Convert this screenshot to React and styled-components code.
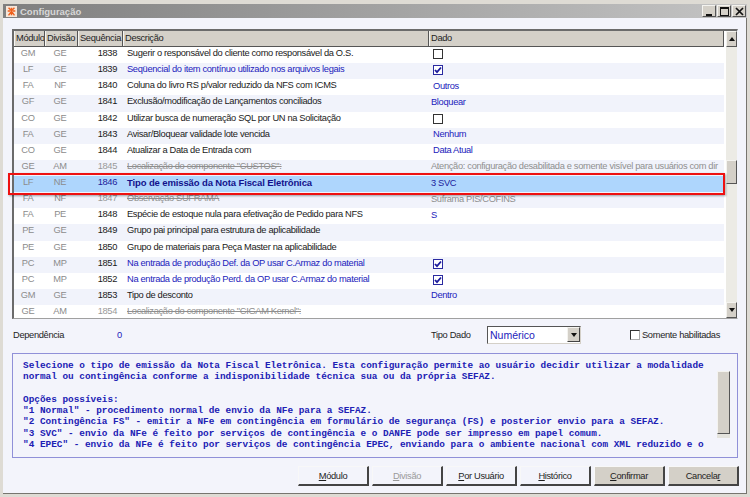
import React from 'react'
import styled, { createGlobalStyle, css } from 'styled-components'

const rows = [
  ['GM', 'GE', 1838, 'Sugerir o responsável do cliente como responsável da O.S.', { check: false }],
  ['LF', 'GE', 1839, 'Seqüencial do item contínuo utilizado nos arquivos legais', { check: true }, 'blue'],
  ['FA', 'NF', 1840, 'Coluna do livro RS p/valor reduzido da NFS com ICMS', { text: 'Outros', indent: 1 }],
  ['GF', 'GE', 1841, 'Exclusão/modificação de Lançamentos conciliados', { text: 'Bloquear' }],
  ['CO', 'GE', 1842, 'Utilizar busca de numeração SQL por UN na Solicitação', { check: false }],
  ['FA', 'GE', 1843, 'Avisar/Bloquear validade lote vencida', { text: 'Nenhum', indent: 1 }],
  ['CO', 'GE', 1844, 'Atualizar a Data de Entrada com', { text: 'Data Atual', indent: 1 }],
  ['GE', 'AM', 1845, 'Localização do componente "CUSTOS":', { text: 'Atenção: configuração desabilitada e somente visível para usuários com dir' }, 'off'],
  ['LF', 'NE', 1846, 'Tipo de emissão da Nota Fiscal Eletrônica', { text: '3 SVC' }, 'selected'],
  ['FA', 'NF', 1847, 'Observação SUFRAMA', { text: 'Suframa PIS/COFINS' }, 'off'],
  ['FA', 'PE', 1848, 'Espécie de estoque nula para efetivação de Pedido para NFS', { text: 'S' }],
  ['PE', 'GE', 1849, 'Grupo pai principal para estrutura de aplicabilidade', {}],
  ['PE', 'GE', 1850, 'Grupo de materiais para Peça Master na aplicabilidade', {}],
  ['PC', 'MP', 1851, 'Na entrada de produção Def. da OP usar C.Armaz do material', { check: true }, 'blue'],
  ['PC', 'MP', 1852, 'Na entrada de produção Perd. da OP usar C.Armaz do material', { check: true }, 'blue'],
  ['GM', 'GE', 1853, 'Tipo de desconto', { text: 'Dentro' }],
  ['GE', 'AM', 1854, 'Localização do componente "CIGAM Kernel":', {}, 'off'],
]

const help = `Selecione o tipo de emissão da Nota Fiscal Eletrônica. Esta configuração permite ao usuário decidir utilizar a modalidade
normal ou contingência conforme a indisponibilidade técnica sua ou da própria SEFAZ.

Opções possíveis:
"1 Normal" - procedimento normal de envio da NFe para a SEFAZ.
"2 Contingência FS" - emitir a NFe em contingência em formulário de segurança (FS) e posterior envio para a SEFAZ.
"3 SVC" - envio da NFe é feito por serviços de contingência e o DANFE pode ser impresso em papel comum.
"4 EPEC" - envio da NFe é feito por serviços de contingência EPEC, enviando para o ambiente nacional com XML reduzido e o`

const buttons = [
  ['M', 'ódulo'],
  ['D', 'ivisão', 'disabled'],
  ['P', 'or Usuário'],
  ['H', 'istórico'],
  ['C', 'onfirmar', 'gray'],
  ['Cancela', 'r', 'gray', true],
]

const App = () => (
  <>
    <GlobalStyle />
    <Window>
      <TitleBar>
        <AppIcon viewBox="0 0 13 13">
          <rect width="13" height="13" fill="#f6e6d8" />
          <path d="M3 2l3 3M10 2L7 5M2 6h3M8 6h3M3 11l3-4M10 11L7 7M6.5 2v9" stroke="#f0601c" strokeWidth="1.7" />
        </AppIcon>
        <Title>Configuração</Title>
        <WinButtons>
          <WinButton><svg width="9" height="9"><rect x="1" y="7" width="6" height="2" fill="#111" /></svg></WinButton>
          <WinButton><svg width="9" height="9"><rect x="0.5" y="0.5" width="8" height="8" fill="none" stroke="#111" /><rect x="0" y="0" width="9" height="2" fill="#111" /></svg></WinButton>
          <WinButton><svg width="9" height="9"><path d="M1 1l7 7M8 1L1 8" stroke="#111" strokeWidth="1.7" /></svg></WinButton>
        </WinButtons>
      </TitleBar>
      <Client>
        <Grid>
          <GridMain>
            <HeaderRow>
              <HeaderCell $w={31}>Módulo</HeaderCell>
              <HeaderCell $w={33}>Divisão</HeaderCell>
              <HeaderCell $w={45}>Sequência</HeaderCell>
              <HeaderCell $w={306}>Descrição</HeaderCell>
              <HeaderCell $grow>Dado</HeaderCell>
            </HeaderRow>
            {rows.map(([mod, div, seq, desc, data, kind], i) => (
              <Row key={seq} $odd={i % 2 === 1} $selected={kind === 'selected'}>
                <CodeCell $w={31}>{mod}</CodeCell>
                <CodeCell $w={33}>{div}</CodeCell>
                <SeqCell $off={kind === 'off'} $selected={kind === 'selected'}>{seq}</SeqCell>
                <DescCell $kind={kind}>{desc}</DescCell>
                <DataCell $off={kind === 'off'} $indent={data.indent} $selected={kind === 'selected'}>
                  {data.check !== undefined ? <Check on={data.check} /> : data.text}
                </DataCell>
              </Row>
            ))}
          </GridMain>
          <ScrollBar>
            <ArrowButton><Arrow /></ArrowButton>
            <Thumb />
            <ArrowButton $down><Arrow $down /></ArrowButton>
          </ScrollBar>
          <Highlight />
        </Grid>
        <Filters>
          <DepLabel>Dependência</DepLabel>
          <DepValue>0</DepValue>
          <TypeLabel>Tipo Dado</TypeLabel>
          <Select>
            <span>Numérico</span>
            <SelectButton><Arrow $down /></SelectButton>
          </Select>
          <OnlyEnabled>
            <PlainBox />
            Somente habilitadas
          </OnlyEnabled>
        </Filters>
        <HelpBox>
          <HelpText>{help}</HelpText>
          <HelpScroll>
            <HelpThumb />
          </HelpScroll>
        </HelpBox>
        <Footer>
          {buttons.map(([a, b, variant, underlineLast]) => (
            <Button key={a + b} $variant={variant}>
              {underlineLast ? (
                <>{a}<u>{b}</u></>
              ) : (
                <><u>{a}</u>{b}</>
              )}
            </Button>
          ))}
        </Footer>
      </Client>
    </Window>
  </>
)

const Check = ({ on }) => (
  <CheckBox $on={on}>
    {on && (
      <svg width="8" height="8" viewBox="0 0 8 8">
        <path d="M1 4l2 2.2L7 1.5" fill="none" stroke="#1c1c9c" strokeWidth="1.8" />
      </svg>
    )}
  </CheckBox>
)

const GlobalStyle = createGlobalStyle`
  html, body {
    margin: 0;
    padding: 0;
    background: #fff;
  }
  * {
    box-sizing: border-box;
  }
`

const Window = styled.div`
  width: 750px;
  height: 497px;
  display: flex;
  flex-direction: column;
  background: #dedbd4;
  border: 3px solid #dedbd4;
  border-top-width: 4px;
  font-family: "Liberation Sans", Arial, sans-serif;
  font-size: 9.3px;
  letter-spacing: -0.33px;
`

const TitleBar = styled.div`
  height: 14px;
  flex: none;
  display: flex;
  align-items: center;
  padding: 0 1px 0 3px;
  background: linear-gradient(to right, #7f7f7f, #c4c4c4);
`

const AppIcon = styled.svg`
  width: 11px;
  height: 11px;
  margin-right: 3px;
`

const Title = styled.div`
  color: #d8d8d8;
  font-weight: bold;
  font-size: 9.5px;
  letter-spacing: 0;
  flex: 1;
`

const WinButtons = styled.div`
  display: flex;
  gap: 1px;
`

const WinButton = styled.div`
  width: 14px;
  height: 12px;
  display: flex;
  align-items: center;
  justify-content: center;
  background: #d4d0c8;
  border: 1px solid;
  border-color: #f4f3ef #555 #555 #f4f3ef;
`

const Client = styled.div`
  flex: 1;
  min-height: 0;
  display: flex;
  flex-direction: column;
  background: #f3f4fb;
  padding: 11px 8px 0 9px;
  border-right: 1px solid #77756f;
  border-bottom: 1px solid #77756f;
`

const Grid = styled.div`
  position: relative;
  height: 290px;
  width: 726px;
  flex: none;
  display: flex;
  background: #fff;
  border: 1px solid;
  border-width: 2px 1px 1px 2px;
  border-color: #6b6b6b #f3f4fb #a0a0a0 #6b6b6b;
`

const GridMain = styled.div`
  width: 710px;
  flex: none;
  overflow: hidden;
`

const HeaderRow = styled.div`
  display: flex;
  height: 16px;
  background: #d4d0c8;
  border-bottom: 1px solid #555;
`

const HeaderCell = styled.div`
  ${(p) => (p.$grow ? 'flex: 1;' : `width: ${p.$w}px; flex: none;`)}
  padding-left: 1px;
  line-height: 14px;
  color: #1e1e1e;
  white-space: nowrap;
  overflow: hidden;
  border-left: 1px solid #f5f4f0;
  border-right: 1px solid #555;
`

const Row = styled.div`
  display: flex;
  height: 16.125px;
  line-height: 13px;
  background: ${(p) => (p.$selected ? '#aed6fd' : p.$odd ? '#f1f3fb' : '#fff')};
`

const CodeCell = styled.div`
  width: ${(p) => p.$w}px;
  flex: none;
  padding-right: 3px;
  text-align: center;
  color: #8c8c8c;
`

const SeqCell = styled.div`
  width: 45px;
  flex: none;
  padding-right: 6px;
  text-align: right;
  color: ${(p) => (p.$off ? '#9a9a9a' : p.$selected ? '#1c1c9c' : '#1a1a1a')};
`

const kinds = {
  blue: css`color: #2222bb;`,
  off: css`
    color: #8f8f8f;
    text-decoration: line-through;
  `,
  selected: css`
    color: #12128c;
    font-weight: bold;
    font-size: 9.5px;
    letter-spacing: -0.12px;
  `,
}

const DescCell = styled.div`
  width: 306px;
  flex: none;
  padding-left: 4px;
  white-space: nowrap;
  overflow: hidden;
  color: #1a1a1a;
  ${(p) => kinds[p.$kind]}
`

const DataCell = styled.div`
  flex: 1;
  min-width: 0;
  display: flex;
  align-items: center;
  padding-left: ${(p) => (p.$indent ? 4 : 2)}px;
  padding-bottom: 2px;
  white-space: nowrap;
  overflow: hidden;
  color: ${(p) => (p.$off ? '#8f8f8f' : p.$selected ? '#1c1c9c' : '#2222bb')};
`

const CheckBox = styled.div`
  width: 10px;
  height: 10px;
  margin-left: 2px;
  display: flex;
  align-items: center;
  justify-content: center;
  background: #fff;
  border: 1px solid ${(p) => (p.$on ? '#2a2aa0' : '#333')};
`

const ScrollBar = styled.div`
  flex: 1;
  margin-left: 2px;
  display: flex;
  flex-direction: column;
  background: #ecebe5;
`

const ArrowButton = styled.div`
  height: 16px;
  flex: none;
  display: flex;
  align-items: center;
  justify-content: center;
  background: #d4d0c8;
  border: 1px solid;
  border-color: #f4f3ef #555 #555 #f4f3ef;
  ${(p) => p.$down && 'margin-top: auto;'}
`

const Arrow = styled.div`
  width: 0;
  height: 0;
  border-left: 3.5px solid transparent;
  border-right: 3.5px solid transparent;
  ${(p) => (p.$down ? 'border-top: 4px solid #111;' : 'border-bottom: 4px solid #111;')}
`

const Thumb = styled.div`
  height: 24px;
  margin-top: 113px;
  flex: none;
  background: #d4d0c8;
  border: 1px solid;
  border-color: #f4f3ef #555 #555 #f4f3ef;
`

const Highlight = styled.div`
  position: absolute;
  left: -6px;
  right: 12px;
  top: 142px;
  height: 22px;
  border: 2px solid #ee1111;
  box-shadow: 1px 1px 2px rgba(0, 0, 0, 0.35);
`

const Filters = styled.div`
  height: 34px;
  flex: none;
  display: flex;
  align-items: center;
  padding-bottom: 3px;
  color: #1e1e1e;
`

const DepLabel = styled.div`
  width: 105px;
  padding-left: 1px;
`

const DepValue = styled.div`
  width: 314px;
  color: #2222bb;
`

const TypeLabel = styled.div`
  width: 56px;
`

const Select = styled.div`
  width: 94px;
  height: 18px;
  display: flex;
  align-items: center;
  justify-content: space-between;
  padding-left: 2px;
  background: #fff;
  color: #2222bb;
  font-size: 10.5px;
  letter-spacing: 0;
  border: 1px solid;
  border-color: #555 #d4d0c8 #d4d0c8 #555;
`

const SelectButton = styled.div`
  width: 13px;
  height: 15px;
  display: flex;
  align-items: center;
  justify-content: center;
  background: #d4d0c8;
  border: 1px solid;
  border-color: #f4f3ef #444 #444 #f4f3ef;
`

const OnlyEnabled = styled.div`
  margin-left: 49px;
  display: flex;
  align-items: center;
  gap: 2px;
`

const PlainBox = styled.div`
  width: 10px;
  height: 10px;
  background: #fff;
  border: 1px solid;
  border-color: #333 #aaa #aaa #333;
`

const HelpBox = styled.div`
  height: 105px;
  width: 726px;
  flex: none;
  display: flex;
  background: #f3f4fb;
  border: 1px solid #9090d8;
`

const HelpText = styled.pre`
  flex: 1;
  min-width: 0;
  margin: 0;
  padding: 6px 0 0 10px;
  overflow: hidden;
  font-family: "Liberation Mono", "Courier New", monospace;
  font-weight: bold;
  font-size: 9.4px;
  line-height: 11.3px;
  letter-spacing: 0;
  color: #2020b4;
`

const HelpScroll = styled.div`
  width: 13px;
  margin: 17px 7px 19px 0;
  flex: none;
  background: #e4e3dd;
`

const HelpThumb = styled.div`
  height: 63px;
  background: #d4d0c8;
  border: 1px solid;
  border-color: #f4f3ef #555 #555 #f4f3ef;
`

const Footer = styled.div`
  flex: 1;
  display: flex;
  justify-content: flex-end;
  gap: 3px;
  padding: 8px 0 0 0;
  width: 727px;
`

const Button = styled.div`
  width: 71px;
  height: 20px;
  display: flex;
  align-items: center;
  justify-content: center;
  white-space: pre;
  border: 1px solid;
  border-width: 1px 2px 2px 1px;
  border-color: #f8f8f8 #444 #444 #f8f8f8;
  background: ${(p) => (p.$variant === 'gray' ? '#d4d0c8' : '#f3f4fb')};
  color: ${(p) => (p.$variant === 'disabled' ? '#9a9a9a' : '#1e1e1e')};
`

export default App
